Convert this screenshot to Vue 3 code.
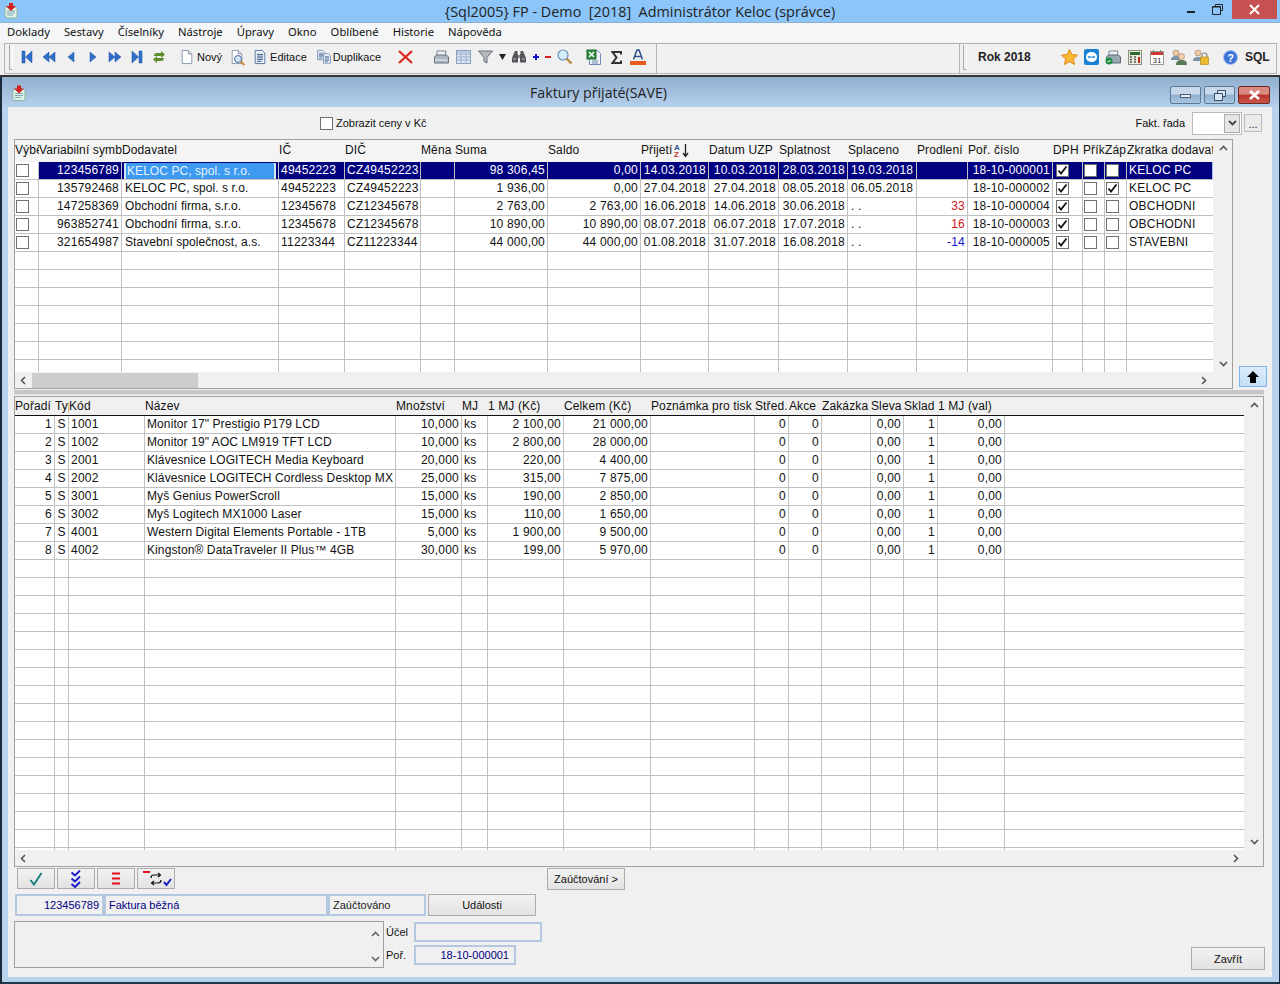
<template>
  <div class="app">
    <svg class="defs" width="0" height="0">
      <symbol id="app-ic" viewBox="0 0 16 16">
        <path d="M2 4h11l1 1v10H4l-2-2z" fill="#dff2e6" stroke="#8fb3a0" />
        <path d="M4 8h8M4 10h8M4 12h6" stroke="#7fa8b8" fill="none" />
        <path d="M6 0h4v3h3L8 8 3 3h3z" fill="#d3201f" />
      </symbol>
      <symbol id="doc-ic" viewBox="0 0 16 16">
        <path d="M2.5.5h7l4 4v11h-11z" fill="#fff" stroke="#7f8fa6" />
        <path d="M9.5.5v4h4" fill="#dbe4f0" stroke="#7f8fa6" />
      </symbol>
      <symbol id="lines-ic" viewBox="0 0 16 16">
        <path d="M2.5.5h8l3 3v12h-11z" fill="#eef3fb" stroke="#4a6a9c" />
        <path d="M4.5 5h7M4.5 7h7M4.5 9h7M4.5 11h7M4.5 13h5" stroke="#2f4f86" fill="none" />
      </symbol>
      <symbol id="check-ic" viewBox="0 0 11 11">
        <path d="M1.5 5.5l2.5 3 5.5-7" fill="none" stroke="#111" stroke-width="1.8" />
      </symbol>
    </svg>

    <header class="titlebar">
      <svg class="app-icon" width="16" height="16"><use href="#app-ic" /></svg>
      <div class="title-text">{Sql2005} FP - Demo&nbsp; [2018]&nbsp; Administrátor Keloc (správce)</div>
      <div class="sys-btns">
        <span class="sys-btn"><i class="min-mark"></i></span>
        <span class="sys-btn">
          <svg width="12" height="11" viewBox="0 0 12 11"><path d="M3.500 2.500V.5h7v6h-2M.5 2.500h8v8h-8z" fill="none" stroke="#222" /><path d="M1 3h7" stroke="#222" /></svg>
        </span>
        <span class="sys-btn sys-close">
          <svg width="11" height="11" viewBox="0 0 11 11"><path d="M1 1l9 9M10 1l-9 9" stroke="#fff" stroke-width="2" /></svg>
        </span>
      </div>
    </header>

    <nav class="menubar">
      <span v-for="m in menu" :key="m">{{ m }}</span>
    </nav>

    <div class="toolbars">
      <div class="tb tb-main">
        <i class="grip"></i>
        <div class="tb-group nav-group">
          <span class="tb-btn"><svg width="14" height="14" viewBox="0 0 14 14"><path class="nav" d="M2 1h3v12H2zM12 1v12L5.500 7z" /></svg></span>
          <span class="tb-btn"><svg width="14" height="14" viewBox="0 0 14 14"><path class="nav" d="M7 2v10L1 7zM13 2v10L7 7z" /></svg></span>
          <span class="tb-btn"><svg width="14" height="14" viewBox="0 0 14 14"><path class="nav" d="M10 2v10L4 7z" /></svg></span>
          <span class="tb-btn"><svg width="14" height="14" viewBox="0 0 14 14"><path class="nav" d="M4 2v10l6-5z" /></svg></span>
          <span class="tb-btn"><svg width="14" height="14" viewBox="0 0 14 14"><path class="nav" d="M1 2v10l6-5zM7 2v10l6-5z" /></svg></span>
          <span class="tb-btn"><svg width="14" height="14" viewBox="0 0 14 14"><path class="nav" d="M12 1H9v12h3zM2 1v12l6.500-6z" /></svg></span>
          <span class="tb-btn">
            <svg width="14" height="14" viewBox="0 0 14 14"><path d="M2 6c0-2 1-3 3-3h4V1l4 3.500L9 8V6H5zM12 8c0 2-1 3-3 3H5v2L1 9.500 5 6v2h4z" fill="#5e8e2c" /></svg>
          </span>
        </div>
        <span class="tb-text novy">
          <svg width="14" height="16"><use href="#doc-ic" /></svg>Nový
        </span>
        <span class="tb-btn preview">
          <svg width="16" height="17" viewBox="0 0 16 17"><use href="#doc-ic" width="14" height="16" /><circle cx="8" cy="10" r="3.500" fill="#cfe6f7" stroke="#4a6a9c" /><path d="M10.500 12.500l4 3.500" stroke="#c98a3a" stroke-width="2" /></svg>
        </span>
        <span class="tb-text editace">
          <svg width="14" height="16"><use href="#lines-ic" /></svg>Editace
        </span>
        <span class="tb-text duplikace">
          <svg width="16" height="16" viewBox="0 0 16 16"><use href="#lines-ic" width="10" height="12" /><use href="#lines-ic" x="6" y="3" width="10" height="13" /></svg>Duplikace
        </span>
        <span class="tb-btn del">
          <svg width="15" height="14" viewBox="0 0 15 14"><path d="M1 1l13 12M14 1L1 13" stroke="#d8261c" stroke-width="2.200" /></svg>
        </span>
        <div class="tb-group tools">
          <span class="tb-btn">
            <svg width="16" height="15" viewBox="0 0 16 15"><path d="M4 1h9l-1 5H4z" fill="#eef0f3" stroke="#7c8794" /><path d="M1.500 7l2-2h10l2 2v6h-14z" fill="#aeb8c4" stroke="#67727f" /><path d="M2 10h12" stroke="#e9edf2" /></svg>
          </span>
          <span class="tb-btn">
            <svg width="15" height="14" viewBox="0 0 15 14"><rect x=".5" y=".5" width="14" height="13" fill="#dde7f5" stroke="#8aa0bf" /><path d="M1 4h13M1 7h13M1 10h13M5 1v12M10 1v12" stroke="#98acc8" /><rect x="1" y="1" width="13" height="3" fill="#b9c9e0" /></svg>
          </span>
          <span class="tb-btn">
            <svg width="15" height="14" viewBox="0 0 15 14"><path d="M.5 1h14L9 7.500V13l-3-1.500v-4z" fill="#b4b9bf" stroke="#6a7078" /></svg>
          </span>
          <span class="tb-btn tiny">
            <svg width="7" height="6" viewBox="0 0 7 6"><path d="M0 0h7L3.500 6z" fill="#222" /></svg>
          </span>
          <span class="tb-btn bino">
            <svg width="16" height="14" viewBox="0 0 16 14"><path d="M4 1h2.500v3H7v8.500H1V8zM12 1H9.500v3H9v8.500h6V8z" fill="#55555c" /><rect x="7" y="5" width="2" height="3" fill="#8a8a92" /><path d="M2 9h3M11 9h3" stroke="#b7b7bd" /></svg>
          </span>
          <span class="tb-sign plus"></span>
          <span class="tb-sign minus"></span>
          <span class="tb-btn mag">
            <svg width="16" height="16" viewBox="0 0 16 16"><circle cx="6" cy="6" r="5" fill="#d5ecfb" stroke="#6d94b8" stroke-width="1.200" /><path d="M9.500 9.500l5 5" stroke="#b58a3c" stroke-width="2.400" /></svg>
          </span>
          <span class="tb-btn excel">
            <svg width="16" height="17" viewBox="0 0 16 17"><path d="M3.500 1.500h8l3 3v11h-11z" fill="#eef3fb" stroke="#6f8bb0" /><rect x="1" y="1" width="9" height="9" fill="#2f8a3f" stroke="#1e6a2e" /><path d="M3 3l5 5M8 3L3 8" stroke="#fff" stroke-width="1.400" /><path d="M6 12h6M6 14h6" stroke="#6f8bb0" /></svg>
          </span>
          <span class="tb-btn">
            <svg width="11" height="13" viewBox="0 0 11 13"><path d="M10 3.500V1H1.500l4 5.500-4 5.500H10V9.500" fill="none" stroke="#333" stroke-width="2" /></svg>
          </span>
          <span class="tb-btn">
            <svg width="16" height="16" viewBox="0 0 16 16"><path d="M3.500 10.500L7 1h2l3.500 9.500M5 7.500h6" fill="none" stroke="#2f4f8f" stroke-width="1.500" /><rect y="12" width="16" height="4" fill="#e8591c" /></svg>
          </span>
        </div>
      </div>
      <div class="tb tb-empty"></div>
      <div class="tb tb-right">
        <i class="grip"></i>
        <b class="rok">Rok 2018</b>
        <div class="tb-group right-icons">
          <span class="tb-btn">
            <svg width="17" height="16" viewBox="0 0 17 16"><path d="M8.500 .5l2.400 5 5.600.7-4.100 3.800 1.100 5.500-5-2.800-5 2.800L4.600 10 .5 6.200l5.600-.7z" fill="#fbb833" stroke="#e08a1c" /></svg>
          </span>
          <span class="tb-btn">
            <svg width="15" height="16" viewBox="0 0 15 16"><rect width="15" height="16" rx="2" fill="#1a82d4" /><rect x="2" y="3" width="11" height="10" rx="5" fill="#fff" /><path d="M3.500 8l2-1.500V7.500h4V6.500l2 1.500-2 1.500v-1h-4v1z" fill="#1a82d4" /></svg>
          </span>
          <span class="tb-btn">
            <svg width="16" height="15" viewBox="0 0 16 15"><path d="M4 1h9l-1 5H4z" fill="#eef0f3" stroke="#7c8794" /><path d="M1.500 7l2-2h10l2 2v6h-14z" fill="#9aa8b6" stroke="#5d6b78" /><circle cx="4" cy="11" r="3.500" fill="#1e8f3e" /><path d="M2.500 11l1 1 2-2" stroke="#fff" fill="none" /></svg>
          </span>
          <span class="tb-btn">
            <svg width="14" height="15" viewBox="0 0 14 15"><rect x=".5" y=".5" width="13" height="14" fill="#ecebe2" stroke="#8d8d80" /><rect x="2" y="2" width="10" height="3" fill="#2e6b2e" /><path d="M2 7h2M6 7h2M2 9.500h2M6 9.500h2M2 12h2M6 12h2" stroke="#555" stroke-width="1.400" /><rect x="10" y="7" width="2" height="6" fill="#b32a1e" /></svg>
          </span>
          <span class="tb-btn">
            <svg width="14" height="15" viewBox="0 0 14 15"><rect x=".5" y="1.500" width="13" height="13" fill="#fff" stroke="#9a9a9a" /><rect x="1" y="2" width="12" height="3" fill="#d5332c" /><path d="M3.500 0v3M10.500 0v3" stroke="#777" /><text x="7" y="12.500" class="cal-num">31</text></svg>
          </span>
          <span class="tb-btn">
            <svg width="16" height="16" viewBox="0 0 16 16"><circle cx="5" cy="4" r="3" fill="#eac8a6" stroke="#a3825f" stroke-width=".6" /><path d="M0 11c0-3 2-4 5-4s4 1 4 4z" fill="#7a93a8" /><circle cx="10.500" cy="7.500" r="3" fill="#f0cfae" stroke="#a3825f" stroke-width=".6" /><path d="M5 16c0-4 2-5 5.500-5S16 12 16 16z" fill="#5c7a5a" /></svg>
          </span>
          <span class="tb-btn">
            <svg width="16" height="16" viewBox="0 0 16 16"><circle cx="5" cy="4" r="3" fill="#eac8a6" stroke="#a3825f" stroke-width=".6" /><path d="M0 12c0-3 2-4 5-4s4 1 4 4z" fill="#7a93a8" /><path d="M9 8V6.500a2.500 2.500 0 0 1 5 0V8" fill="none" stroke="#8a8a8a" stroke-width="1.200" /><rect x="7.500" y="8" width="8" height="7.500" fill="#e9b92e" stroke="#a98214" stroke-width=".6" /></svg>
          </span>
          <span class="tb-btn help">
            <svg width="15" height="15" viewBox="0 0 15 15"><circle cx="7.500" cy="7.500" r="7" fill="#3a72d8" stroke="#a9c6f0" /><text x="7.500" y="11.500" class="help-q">?</text></svg>
          </span>
        </div>
        <b class="sql">SQL</b>
      </div>
    </div>

    <section class="child">
      <div class="child-title">
        <svg class="child-icon" width="16" height="17"><use href="#app-ic" /></svg>
        <div class="child-text">Faktury přijaté(SAVE)</div>
        <div class="child-btns">
          <span class="glass"><i class="glass-min"></i></span>
          <span class="glass">
            <svg width="12" height="11" viewBox="0 0 12 11"><path d="M3.500 3V.5h8v6H9M.5 3.500h8v7h-8z" fill="#d9e6f4" stroke="#394b60" /></svg>
          </span>
          <span class="glass glass-close">
            <svg width="13" height="10" viewBox="0 0 13 10"><path d="M2 1l9 8M11 1L2 9" stroke="#fff" stroke-width="2.600" /></svg>
          </span>
        </div>
      </div>

      <div class="client">
        <div class="filter-row">
          <span class="box filter-box"></span>
          <span class="small filter-label">Zobrazit ceny v Kč</span>
          <span class="small rada-label">Fakt. řada</span>
          <span class="combo">
            <span class="combo-arrow">
              <svg width="9" height="6" viewBox="0 0 9 6"><path d="M1 1l3.500 3.500L8 1" fill="none" stroke="#444" stroke-width="1.800" /></svg>
            </span>
          </span>
          <span class="dots">...</span>
        </div>

        <div class="top-row">
          <div class="grid top-grid">
            <div class="grid-main">
              <div class="table-clip">
                <table :style="{ width: sum(topCols) + 'px' }">
                  <colgroup><col v-for="(w, i) in topCols" :key="i" :style="{ width: w + 'px' }" /></colgroup>
                  <thead>
                    <tr>
                      <th v-for="h in topHead" :key="h">
                        {{ h }}
                        <svg v-if="h === 'Přijetí'" class="sort-ic" width="16" height="15" viewBox="0 0 16 15">
                          <text x="0" y="6.500" class="sort-a">A</text>
                          <text x="0" y="14" class="sort-z">Z</text>
                          <path d="M11.500 1v12M9 10l2.500 3.500L14 10" fill="none" stroke="#222" stroke-width="1.300" />
                        </svg>
                      </th>
                    </tr>
                  </thead>
                  <tbody>
                    <tr v-for="(r, i) in topRows" :key="i" :class="{ selected: i === 0 }">
                      <td class="sel-cell"><span class="box"></span></td>
                      <td class="r">{{ r.vs }}</td>
                      <td class="name-cell"><span :class="{ active: i === 0 }">{{ r.name }}</span></td>
                      <td>{{ r.ico }}</td>
                      <td>{{ r.dic }}</td>
                      <td></td>
                      <td class="r">{{ r.suma }}</td>
                      <td class="r">{{ r.saldo }}</td>
                      <td class="r">{{ r.prijeti }}</td>
                      <td class="r">{{ r.uzp }}</td>
                      <td class="r">{{ r.splatnost }}</td>
                      <td class="paid">{{ r.splaceno }}</td>
                      <td class="r" :class="r.prodleni < 0 ? 'early' : 'late'">{{ r.prodleni }}</td>
                      <td class="r">{{ r.por }}</td>
                      <td class="chk chk-dph"><span class="box"><svg width="11" height="11"><use href="#check-ic" /></svg></span></td>
                      <td class="chk"><span class="box"><svg v-if="r.prik" width="11" height="11"><use href="#check-ic" /></svg></span></td>
                      <td class="chk"><span class="box"><svg v-if="r.zap" width="11" height="11"><use href="#check-ic" /></svg></span></td>
                      <td class="short-cell">{{ r.short }}</td>
                    </tr>
                    <tr v-for="n in 7" :key="'e' + n">
                      <td v-for="(w, i) in topCols" :key="i"></td>
                    </tr>
                  </tbody>
                </table>
              </div>
              <div class="hscroll">
                <svg class="chev" width="9" height="9" viewBox="0 0 9 9"><path d="M6 1L2.500 4.500 6 8" fill="none" stroke="#555" stroke-width="1.600" /></svg>
                <span class="thumb"></span>
                <svg class="chev chev-end" width="9" height="9" viewBox="0 0 9 9"><path d="M3 1l3.500 3.500L3 8" fill="none" stroke="#555" stroke-width="1.600" /></svg>
              </div>
            </div>
            <div class="vscroll">
              <svg width="9" height="9" viewBox="0 0 9 9"><path d="M1 6l3.500-3.500L8 6" fill="none" stroke="#555" stroke-width="1.600" /></svg>
              <svg width="9" height="9" viewBox="0 0 9 9"><path d="M1 3l3.500 3.500L8 3" fill="none" stroke="#555" stroke-width="1.600" /></svg>
            </div>
          </div>
          <span class="up-btn">
            <svg width="12" height="12" viewBox="0 0 12 12"><path d="M6 0l6 6H9v6H3V6H0z" fill="#000" /></svg>
          </span>
        </div>

        <div class="splitter"></div>

        <div class="grid bottom-grid">
          <div class="grid-main">
            <div class="table-clip">
              <table class="items" :style="{ width: sum(itemCols) + 'px' }">
                <colgroup><col v-for="(w, i) in itemCols" :key="i" :style="{ width: w + 'px' }" /></colgroup>
                <thead>
                  <tr><th v-for="h in itemHead" :key="h">{{ h }}</th><th></th></tr>
                </thead>
                <tbody>
                  <tr v-for="r in items" :key="r.n">
                    <td class="r">{{ r.n }}</td>
                    <td class="c">S</td>
                    <td class="pad">{{ r.code }}</td>
                    <td class="item-name">{{ r.name }}</td>
                    <td class="r">{{ r.qty }}</td>
                    <td class="pad">ks</td>
                    <td class="r">{{ r.price }}</td>
                    <td class="r">{{ r.total }}</td>
                    <td></td>
                    <td class="r">0</td>
                    <td class="r">0</td>
                    <td></td>
                    <td class="r">0,00</td>
                    <td class="r">1</td>
                    <td class="r">0,00</td>
                    <td></td>
                  </tr>
                  <tr v-for="n in 17" :key="'e' + n">
                    <td v-for="(w, i) in itemCols" :key="i"></td>
                  </tr>
                </tbody>
              </table>
            </div>
            <div class="hscroll">
              <svg class="chev" width="9" height="9" viewBox="0 0 9 9"><path d="M6 1L2.500 4.500 6 8" fill="none" stroke="#555" stroke-width="1.600" /></svg>
              <svg class="chev chev-end" width="9" height="9" viewBox="0 0 9 9"><path d="M3 1l3.500 3.500L3 8" fill="none" stroke="#555" stroke-width="1.600" /></svg>
            </div>
          </div>
          <div class="vscroll">
            <svg width="9" height="9" viewBox="0 0 9 9"><path d="M1 6l3.500-3.500L8 6" fill="none" stroke="#555" stroke-width="1.600" /></svg>
            <svg width="9" height="9" viewBox="0 0 9 9"><path d="M1 3l3.500 3.500L8 3" fill="none" stroke="#555" stroke-width="1.600" /></svg>
          </div>
        </div>

        <div class="action-row">
          <span class="btn act">
            <svg width="14" height="14" viewBox="0 0 14 14"><path d="M1.500 8l3.500 4.500L12.500 1" fill="none" stroke="#14807a" stroke-width="1.900" /></svg>
          </span>
          <span class="btn act">
            <svg width="12" height="18" viewBox="0 0 12 18"><path d="M1.500 2.500L5 5.500 10 .5M1.500 8.500L5 11.500l5-5M1.500 14L5 17l5-5" fill="none" stroke="#1a1ac8" stroke-width="1.900" /></svg>
          </span>
          <span class="btn act">
            <svg width="8" height="13" viewBox="0 0 8 13"><path d="M0 1.500h8M0 6.500h8M0 11.500h8" stroke="#e0101c" stroke-width="2" /></svg>
          </span>
          <span class="btn act">
            <svg width="32" height="17" viewBox="0 0 32 17"><path d="M3 2h7" stroke="#e0101c" stroke-width="2" /><path d="M11 8c0-2 1-3 3-3h6M18 3l2.500 2L18 7M21 10c0 2-1 3-3 3h-6M14 11l-2.500 2 2.500 2" fill="none" stroke="#111" stroke-width="1.200" /><path d="M24 12l2.500 3L31 9" fill="none" stroke="#1a1ac8" stroke-width="2" /></svg>
          </span>
          <span class="btn small zauct">Zaúčtování &gt;</span>
        </div>

        <div class="status-row">
          <span class="field small f-vs">123456789</span>
          <span class="field small f-type">Faktura běžná</span>
          <span class="field small f-state">Zaúčtováno</span>
          <span class="btn small udalosti">Události</span>
        </div>

        <div class="note-row">
          <div class="memo">
            <div class="memo-scroll">
              <svg width="9" height="9" viewBox="0 0 9 9"><path d="M1 6l3.500-3.500L8 6" fill="none" stroke="#666" stroke-width="1.600" /></svg>
              <svg width="9" height="9" viewBox="0 0 9 9"><path d="M1 3l3.500 3.500L8 3" fill="none" stroke="#666" stroke-width="1.600" /></svg>
            </div>
          </div>
          <div class="note-fields">
            <div class="note-line">
              <label class="small">Účel</label>
              <span class="field f-ucel"></span>
            </div>
            <div class="note-line">
              <label class="small">Poř.</label>
              <span class="field small f-por">18-10-000001</span>
            </div>
          </div>
          <span class="btn small zavrit">Zavřít</span>
        </div>
      </div>
    </section>
  </div>
</template>

<script setup>
const menu = ['Doklady', 'Sestavy', 'Číselníky', 'Nástroje', 'Úpravy', 'Okno', 'Oblíbené', 'Historie', 'Nápověda']

const sum = (list) => list.reduce((a, b) => a + b, 0)

const topCols = [24, 83, 157, 66, 76, 34, 93, 93, 68, 70, 69, 69, 51, 85, 30, 22, 22, 87]
const topHead = ['Výběr', 'Variabilní symbol', 'Dodavatel', 'IČ', 'DIČ', 'Měna', 'Suma', 'Saldo', 'Přijetí', 'Datum UZP', 'Splatnost', 'Splaceno', 'Prodlení', 'Poř. číslo', 'DPH', 'Přík', 'Záp', 'Zkratka dodavatele']

const topRows = [
  { vs: '123456789', name: 'KELOC PC, spol. s r.o.', ico: '49452223', dic: 'CZ49452223', suma: '98 306,45', saldo: '0,00', prijeti: '14.03.2018', uzp: '10.03.2018', splatnost: '28.03.2018', splaceno: '19.03.2018', prodleni: '', por: '18-10-000001', prik: false, zap: false, short: 'KELOC PC' },
  { vs: '135792468', name: 'KELOC PC, spol. s r.o.', ico: '49452223', dic: 'CZ49452223', suma: '1 936,00', saldo: '0,00', prijeti: '27.04.2018', uzp: '27.04.2018', splatnost: '08.05.2018', splaceno: '06.05.2018', prodleni: '', por: '18-10-000002', prik: false, zap: true, short: 'KELOC PC' },
  { vs: '147258369', name: 'Obchodní firma, s.r.o.', ico: '12345678', dic: 'CZ12345678', suma: '2 763,00', saldo: '2 763,00', prijeti: '16.06.2018', uzp: '14.06.2018', splatnost: '30.06.2018', splaceno: '. .', prodleni: 33, por: '18-10-000004', prik: false, zap: false, short: 'OBCHODNI' },
  { vs: '963852741', name: 'Obchodní firma, s.r.o.', ico: '12345678', dic: 'CZ12345678', suma: '10 890,00', saldo: '10 890,00', prijeti: '08.07.2018', uzp: '06.07.2018', splatnost: '17.07.2018', splaceno: '. .', prodleni: 16, por: '18-10-000003', prik: false, zap: false, short: 'OBCHODNI' },
  { vs: '321654987', name: 'Stavební společnost, a.s.', ico: '11223344', dic: 'CZ11223344', suma: '44 000,00', saldo: '44 000,00', prijeti: '01.08.2018', uzp: '31.07.2018', splatnost: '16.08.2018', splaceno: '. .', prodleni: -14, por: '18-10-000005', prik: false, zap: false, short: 'STAVEBNI' },
]

const itemCols = [40, 14, 76, 251, 66, 26, 76, 87, 104, 34, 33, 49, 33, 34, 67, 241]
const itemHead = ['Pořadí', 'Typ', 'Kód', 'Název', 'Množství', 'MJ', '1 MJ (Kč)', 'Celkem (Kč)', 'Poznámka pro tisk', 'Střed.', 'Akce', 'Zakázka', 'Sleva', 'Sklad', '1 MJ (val)']

const items = [
  { n: 1, code: '1001', name: 'Monitor 17" Prestigio P179 LCD', qty: '10,000', price: '2 100,00', total: '21 000,00' },
  { n: 2, code: '1002', name: 'Monitor 19" AOC LM919 TFT LCD', qty: '10,000', price: '2 800,00', total: '28 000,00' },
  { n: 3, code: '2001', name: 'Klávesnice LOGITECH Media Keyboard', qty: '20,000', price: '220,00', total: '4 400,00' },
  { n: 4, code: '2002', name: 'Klávesnice LOGITECH Cordless Desktop MX', qty: '25,000', price: '315,00', total: '7 875,00' },
  { n: 5, code: '3001', name: 'Myš Genius PowerScroll', qty: '15,000', price: '190,00', total: '2 850,00' },
  { n: 6, code: '3002', name: 'Myš Logitech MX1000 Laser', qty: '15,000', price: '110,00', total: '1 650,00' },
  { n: 7, code: '4001', name: 'Western Digital Elements Portable - 1TB', qty: '5,000', price: '1 900,00', total: '9 500,00' },
  { n: 8, code: '4002', name: 'Kingston® DataTraveler II Plus™ 4GB', qty: '30,000', price: '199,00', total: '5 970,00' },
]
</script>

<style>
html, body {
  margin: 0;
  background: #b9d3ee;
}
</style>

<style scoped>
.app {
  width: 1280px;
  height: 984px;
  display: flex;
  flex-direction: column;
  overflow: hidden;
  font-family: "Liberation Sans", Arial, sans-serif;
  font-size: 12px;
  color: #111;
  background: #f0f0f0;
}
.defs { position: absolute; }

.titlebar {
  height: 23px;
  flex: none;
  box-sizing: border-box;
  display: grid;
  grid-template-columns: 1fr auto 1fr;
  background: #8bc5f9;
  border-bottom: 1px solid #8fb0cc;
}
.app-icon { margin: 3px 0 0 3px; }
.title-text {
  font-family: "Open Sans", sans-serif;
  font-size: 14.400px;
  line-height: 23px;
  color: #222;
}
.sys-btns { display: flex; justify-content: flex-end; margin-right: 3px; height: 19px; }
.sys-btn { width: 27px; display: flex; align-items: center; justify-content: center; }
.min-mark { width: 8px; height: 2px; margin-top: 4px; background: #222; }
.sys-close { width: 45px; margin-left: 1px; background: #c75050; }

.menubar {
  height: 19px;
  flex: none;
  display: flex;
  gap: 14px;
  padding-left: 7px;
  background: #f5f6f7;
  font-family: "Noto Sans", sans-serif;
  font-size: 11.250px;
  line-height: 18px;
}

.toolbars {
  height: 35px;
  flex: none;
  box-sizing: border-box;
  display: flex;
  padding: 1px 3px 1px 4px;
  background: #f0f0f0;
  border-bottom: 2px solid #333;
}
.tb {
  box-sizing: border-box;
  display: flex;
  align-items: center;
  padding-bottom: 3px;
  border: 1px solid #b4b4b4;
  margin-right: -1px;
}
.tb-main { width: 653px; }
.tb-empty { width: 304px; }
.tb-right { width: 318px; }
.grip {
  width: 2px;
  height: 24px;
  margin-left: 4px;
  border-left: 1px solid #aaa;
  border-bottom: 1px solid #aaa;
  border-right: 1px solid #fff;
  flex: none;
}
.tb-right .grip { margin-left: 3px; }
.tb-group { display: flex; align-items: center; }
.tb-btn { width: 22px; height: 22px; display: flex; align-items: center; justify-content: center; flex: none; }
.tb-text { display: flex; align-items: center; font-size: 11px; flex: none; }
.nav-group { margin-left: 3px; }
.nav { fill: #2f70cc; stroke: #1c4f9c; stroke-width: .5; }
.novy { margin-left: 10px; gap: 3px; }
.preview { margin-left: 5px; }
.editace { margin-left: 4px; gap: 3px; }
.duplikace { margin-left: 9px; gap: 1px; }
.del { margin-left: 13px; }
.tools { margin-left: 14px; }
.tiny { width: 12px; }
.tb-sign { width: 12px; height: 12px; flex: none; position: relative; }
.tb-sign::before {
  content: "";
  position: absolute;
  left: 3px;
  top: 5px;
  width: 6px;
  height: 2px;
  background: #d02020;
}
.plus::before { background: #1414c8; }
.plus::after {
  content: "";
  position: absolute;
  left: 5px;
  top: 3px;
  width: 2px;
  height: 6px;
  background: #1414c8;
}
.excel { margin-left: 7px; }
.rok { margin-left: 11px; width: 53px; flex: none; color: #222; }
.right-icons { margin-left: 27px; }
.help { margin-left: 7px; }
.sql { margin-left: 4px; color: #222; }
.cal-num { font: 8px "Liberation Sans", sans-serif; text-anchor: middle; fill: #333; }
.help-q { font: bold 11px "Liberation Sans", sans-serif; text-anchor: middle; fill: #fff; }

.child {
  flex: 1;
  min-height: 0;
  display: flex;
  flex-direction: column;
  box-sizing: border-box;
  background: #b9d3ee;
  border-left: 2px solid #1a2a3a;
  border-right: 1px solid #1a2a3a;
  border-bottom: 2px solid #1a3a4a;
}
.child-title {
  height: 30px;
  flex: none;
  display: flex;
  align-items: center;
  background: linear-gradient(#92afcf, #b5d0ec);
}
.child-icon { margin-left: 9px; margin-top: 2px; }
.child-text {
  flex: 1;
  text-align: center;
  font-family: "Open Sans", sans-serif;
  font-size: 14.200px;
  color: #222;
}
.child-btns { display: flex; gap: 3px; margin-right: 9px; margin-top: 6px; }
.glass {
  width: 31px;
  height: 18px;
  box-sizing: border-box;
  display: flex;
  align-items: center;
  justify-content: center;
  border: 1px solid #5d7794;
  border-radius: 2px;
  background: linear-gradient(#c6d8ea 45%, #8fb0d0 50%, #a9c6e0);
}
.glass-min { width: 11px; height: 4px; margin-top: 2px; box-sizing: border-box; background: #e8eff6; border: 1px solid #4a5d72; }
.glass-close { width: 32px; background: linear-gradient(#d98a80 45%, #b8352a 50%, #c9564a); border-color: #6e2a26; }

.client {
  flex: 1;
  min-height: 0;
  margin: 0 7px 5px 6px;
  background: #f0f0f0;
}
.small { font-size: 11px; }
.box {
  width: 13px;
  height: 13px;
  box-sizing: border-box;
  display: flex;
  align-items: center;
  justify-content: center;
  background: #fff;
  border: 1px solid #707070;
}
.filter-row { height: 32px; display: flex; align-items: center; padding-left: 312px; box-sizing: border-box; }
.filter-box { margin-top: 1px; }
.filter-label { margin-left: 3px; }
.rada-label { margin-left: 709px; }
.combo {
  width: 50px;
  height: 23px;
  box-sizing: border-box;
  margin-left: 7px;
  display: flex;
  justify-content: flex-end;
  background: #fff;
  border: 1px solid #bbb;
  padding: 1px;
}
.combo-arrow { width: 16px; display: flex; align-items: center; justify-content: center; background: #e6e6e6; border: 1px solid #aaa; box-sizing: border-box; }
.dots { width: 18px; height: 18px; margin-left: 2px; box-sizing: border-box; border: 1px solid #bbb; background: #eaeaea; text-align: center; font-size: 11px; line-height: 18px; }

.top-row { display: flex; padding-left: 6px; align-items: flex-end; }
.grid { box-sizing: border-box; display: flex; border: 1px solid #a0a0a0; background: #f0f0f0; }
.top-grid { width: 1219px; height: 250px; }
.grid-main { flex: 1; min-width: 0; display: flex; flex-direction: column; }
.table-clip { flex: 1; min-height: 0; overflow: hidden; background: #fff; }
.top-grid .table-clip { background: #f0f0f0; }
.bottom-grid { width: 1250px; height: 471px; margin-left: 6px; }
.bottom-grid .table-clip { background: #fff; }
table { table-layout: fixed; border-collapse: separate; border-spacing: 0; }
th {
  height: 22px;
  box-sizing: border-box;
  padding: 0 0 2px;
  text-align: left;
  font-weight: normal;
  letter-spacing: .12px;
  overflow: hidden;
  white-space: nowrap;
  background: #f4f4f4;
  position: relative;
}
td {
  height: 18px;
  box-sizing: border-box;
  padding: 0 2px 1px;
  border-right: 1px solid #c0c0c0;
  border-bottom: 1px solid #c0c0c0;
  overflow: hidden;
  white-space: nowrap;
  background: #fff;
  letter-spacing: .22px;
}
.r { text-align: right; }
.c { text-align: center; padding-left: 0; padding-right: 0; }
.pad { padding-left: 2px; }
.sort-ic { position: absolute; left: 33px; top: 3px; }
.sort-a { font: bold 8px "Liberation Sans", sans-serif; fill: #2f4f8f; }
.sort-z { font: bold 8px "Liberation Sans", sans-serif; fill: #c0392b; }
.sel-cell { padding: 0 0 0 1px; }
.chk { padding: 0 0 0 1px; }
.chk-dph { padding-left: 3px; }
.name-cell { padding-left: 3px; letter-spacing: .06px; }
.item-name { padding-left: 2px; letter-spacing: .1px; }
.paid { padding-left: 3px; }
.late { color: #d01818; }
.early { color: #1414c8; }
.selected td { background: #000080; color: #fff; }
.selected .sel-cell { background: #fff; }
.selected .name-cell { padding: 0 2px; }
.active {
  display: block;
  background: #3d9af0;
  color: #e6f2ff;
  height: 16px;
  line-height: 16px;
  padding-left: 1px;
  border-left: 2px solid #cfe6fb;
  border-right: 2px solid #cfe6fb;
}
.selected .short-cell { border-right: 2px solid #9fc4ec; }
.short-cell { padding-left: 2px; }
.items th {
  height: 19px;
  padding-bottom: 1px;
  border-bottom: 1px solid #111;
  background: #f0f0f0;
}
.hscroll { height: 16px; flex: none; display: flex; align-items: center; background: #f0f0f0; padding: 0 4px; position: relative; }
.chev { flex: none; }
.chev-end { margin-left: auto; }
.top-grid .chev-end { margin-right: 1px; }
.thumb { width: 166px; height: 15px; margin-left: 4px; background: #cdcdcd; }
.vscroll {
  width: 17px;
  flex: none;
  margin-left: 2px;
  padding: 4px 0 20px;
  box-sizing: border-box;
  display: flex;
  flex-direction: column;
  justify-content: space-between;
  align-items: center;
  background: #f0f0f0;
}
.up-btn {
  width: 28px;
  height: 21px;
  box-sizing: border-box;
  margin: 0 0 2px 6px;
  display: flex;
  align-items: center;
  justify-content: center;
  background: linear-gradient(#dcecfb, #c4dff7);
  border: 1px solid #7eb4ea;
}

.splitter { height: 5px; width: 1250px; margin: 1px 0 1px 6px; background: #c6c6c6; border-bottom: 1px solid #ddd; box-sizing: border-box; }

.action-row { display: flex; height: 21px; margin: 1px 0 0 9px; gap: 2px; }
.btn {
  box-sizing: border-box;
  display: flex;
  align-items: center;
  justify-content: center;
  border: 1px solid #acacac;
  background: linear-gradient(#f2f2f2, #e2e2e2);
}
.act { width: 38px; }
.zauct { width: 78px; margin-left: 370px; height: 22px; }

.status-row { display: flex; height: 22px; margin: 5px 0 0 7px; }
.field {
  box-sizing: border-box;
  display: flex;
  align-items: center;
  padding: 0 3px;
  background: #f0f0f0;
  border: 2px solid #b4c8e0;
  color: #000080;
}
.f-vs { width: 89px; justify-content: flex-end; }
.f-type { width: 224px; }
.f-state { width: 98px; color: #222; }
.udalosti { width: 108px; margin-left: 2px; }

.note-row { display: flex; height: 47px; margin: 5px 0 0 6px; }
.memo { width: 370px; box-sizing: border-box; display: flex; justify-content: flex-end; border: 1px solid #a0a0a0; background: #f0f0f0; }
.memo-scroll { width: 15px; display: flex; flex-direction: column; justify-content: space-between; align-items: center; padding: 8px 0 4px; box-sizing: border-box; }
.note-fields { margin-left: 2px; display: flex; flex-direction: column; gap: 2px; }
.note-line { display: flex; align-items: center; height: 21px; }
.note-line label { width: 28px; }
.f-ucel { width: 128px; height: 20px; }
.f-por { width: 102px; height: 20px; justify-content: flex-end; padding-right: 5px; }
.zavrit { width: 74px; height: 23px; margin: 26px 7px 0 auto; }
</style>
